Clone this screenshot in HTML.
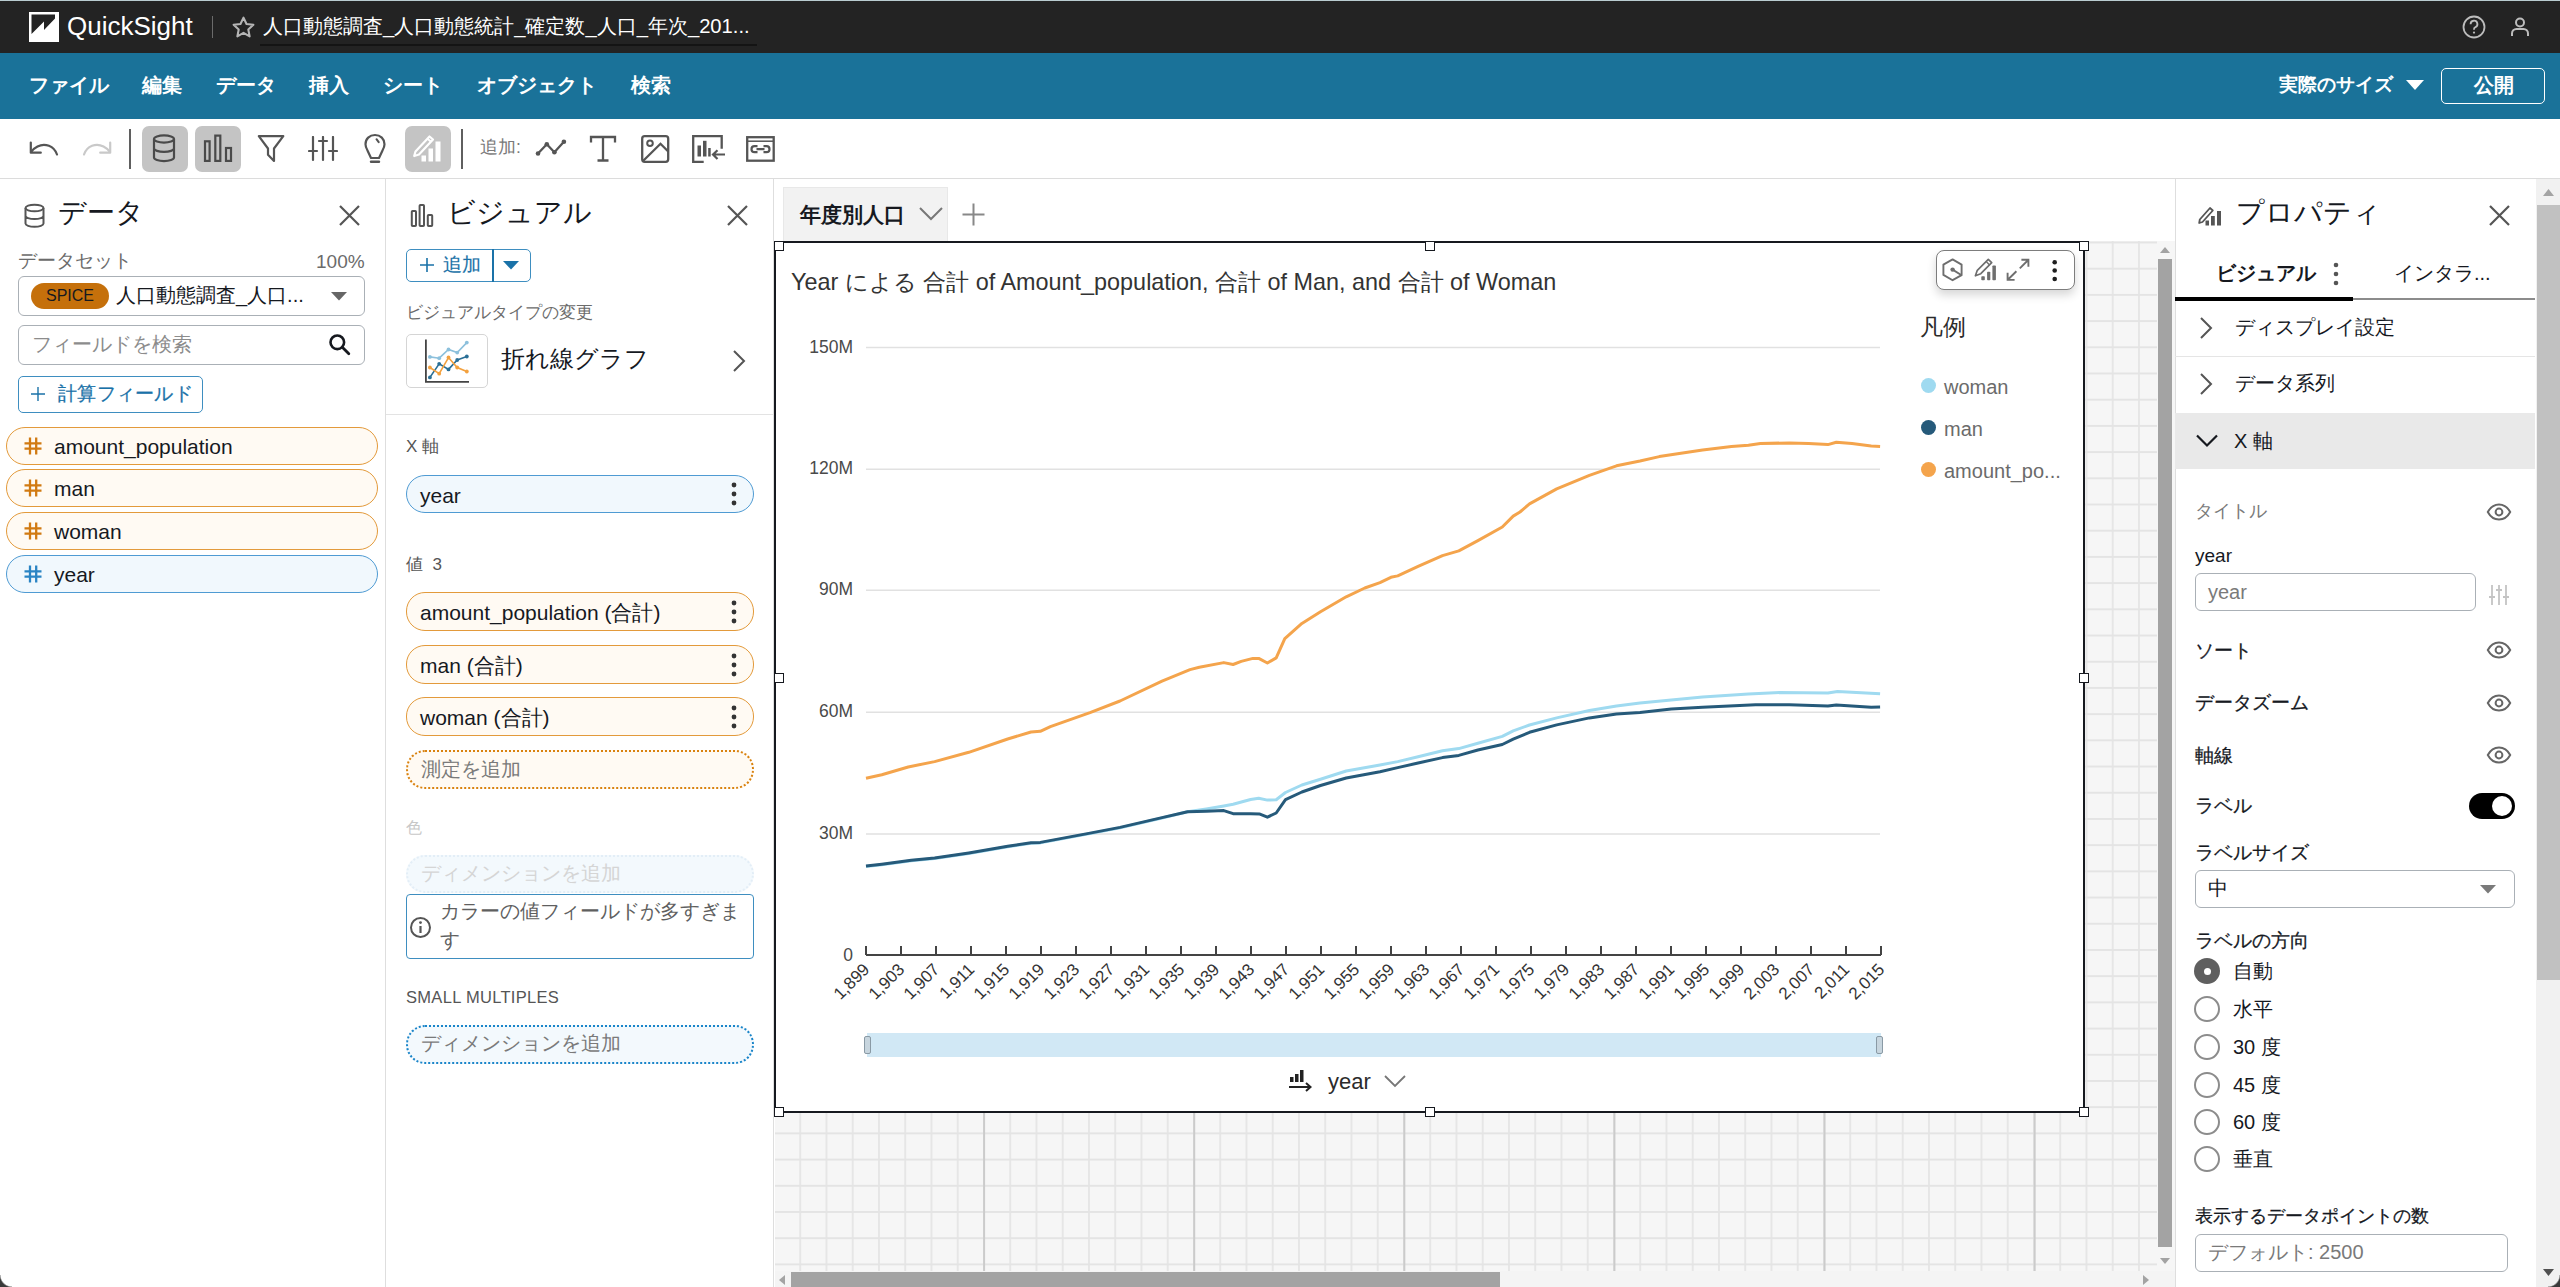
<!DOCTYPE html>
<html lang="ja">
<head>
<meta charset="utf-8">
<style>
*{box-sizing:border-box;margin:0;padding:0}
html,body{width:2560px;height:1287px;overflow:hidden;background:#fff}
body{font-family:"Liberation Sans",sans-serif;color:#16191f;position:relative}
.abs{position:absolute}
.t{position:absolute;white-space:nowrap;line-height:1}
#topbar{position:absolute;left:0;top:0;width:2560px;height:53px;background:#232323;border-top:1px solid #b9ccd0}
#menubar{position:absolute;left:0;top:53px;width:2560px;height:66px;background:#1a7299}
#toolbar{position:absolute;left:0;top:119px;width:2560px;height:60px;background:#fff;border-bottom:1px solid #dcdcdc}
.menu{position:absolute;top:76px;font-size:19.5px;font-weight:bold;color:#fff;line-height:1}
.tbsel{position:absolute;top:126px;width:46px;height:46px;border-radius:7px;background:#c4c4c4}
.sep{position:absolute;width:2px;background:#555}
#leftpanel{position:absolute;left:0;top:179px;width:386px;height:1108px;background:#fff;border-right:1px solid #dedede}
#vispanel{position:absolute;left:386px;top:179px;width:388px;height:1108px;background:#fff;border-right:1px solid #dedede}
#canvas{position:absolute;left:774px;top:179px;width:1401px;height:1108px;background:#fff}
#grid{position:absolute;left:775px;top:241px;width:1382px;height:1030px;background-color:#f6f6f6;
 background-image:linear-gradient(#e4e4e4 2px,transparent 2px),linear-gradient(90deg,#e6e6e6 2px,transparent 2px);
 background-size:26.265px 26.21px;background-position:-2px 0.5px}
#grid2{position:absolute;left:775px;top:241px;width:1382px;height:1030px;
 background-image:linear-gradient(90deg,#cbcbcb 2px,transparent 2px);background-size:210.12px 100%;background-position:-2px 0}
#props{position:absolute;left:2175px;top:179px;width:385px;height:1108px;background:#fff;border-left:1px solid #dedede}
.pill{position:absolute;height:38px;border-radius:19px;border:1.3px solid #e39a3b;background:#fffaf3}
.pill.b{border-color:#4f9bd3;background:#f1f8fd}
.ptxt{position:absolute;font-size:21px;line-height:1;white-space:nowrap;color:#16191f}
.hash{position:absolute;font-size:22px;font-weight:bold;color:#d17a12;line-height:1}
</style>
</head>
<body>
<!-- TOP BAR -->
<div id="topbar"></div>
<svg class="abs" style="left:29px;top:12px" width="31" height="31" viewBox="0 0 31 31">
 <rect x="0" y="0" width="30" height="30" fill="#fff"/>
 <path d="M2.5 2.5 H26 V6.5 L15 18 V9.5 L2.5 22 Z" fill="#232323"/>
</svg>
<div class="t" style="left:67px;top:13px;font-size:26px;color:#fff">QuickSight</div>
<div class="abs" style="left:212px;top:16px;width:1px;height:22px;background:#6b6b6b"></div>
<svg class="abs" style="left:231px;top:15px" width="25" height="25" viewBox="0 0 24 24"><path d="M12 2.5l2.9 6.1 6.6.8-4.9 4.5 1.3 6.6L12 17.2l-5.9 3.3 1.3-6.6-4.9-4.5 6.6-.8z" fill="none" stroke="#b5b5b5" stroke-width="2" stroke-linejoin="round"/></svg>
<div class="t" style="left:263px;top:16px;font-size:20.2px;color:#fff">人口動態調査_人口動態統計_確定数_人口_年次_201...</div>
<div class="abs" style="left:260px;top:44px;width:497px;height:1.5px;background:#141414"></div>
<svg class="abs" style="left:2461px;top:14px" width="26" height="26" viewBox="0 0 26 26"><circle cx="13" cy="13" r="10.5" fill="none" stroke="#bdbdbd" stroke-width="1.8"/><path d="M9.6 10.2a3.4 3.4 0 1 1 4.6 3.1c-.8.4-1.2 1-1.2 1.9v.6" fill="none" stroke="#bdbdbd" stroke-width="1.8"/><circle cx="13" cy="18.6" r="1.1" fill="#bdbdbd"/></svg>
<svg class="abs" style="left:2508px;top:15px" width="24" height="24" viewBox="0 0 24 24"><circle cx="12" cy="7.5" r="4" fill="none" stroke="#bdbdbd" stroke-width="2"/><path d="M4 21v-2.5c0-2.5 2-4.5 4.5-4.5h7c2.5 0 4.5 2 4.5 4.5V21" fill="none" stroke="#bdbdbd" stroke-width="2"/></svg>

<!-- MENU BAR -->
<div id="menubar"></div>
<div class="menu" style="left:29px">ファイル</div>
<div class="menu" style="left:142px">編集</div>
<div class="menu" style="left:216px">データ</div>
<div class="menu" style="left:309px">挿入</div>
<div class="menu" style="left:383px">シート</div>
<div class="menu" style="left:477px">オブジェクト</div>
<div class="menu" style="left:631px">検索</div>
<div class="menu" style="left:2279px;font-size:18.8px">実際のサイズ</div>
<svg class="abs" style="left:2405px;top:79px" width="20" height="12" viewBox="0 0 20 12"><path d="M1 1h18L10 11z" fill="#fff"/></svg>
<div class="abs" style="left:2441px;top:68px;width:104px;height:36px;border:1px solid #fff;border-radius:5px"></div>
<div class="menu" style="left:2474px">公開</div>

<!-- TOOLBAR -->
<div id="toolbar"></div>
<svg class="abs" style="left:28px;top:138px" width="32" height="20" viewBox="0 0 32 20"><path d="M29 16.5C26 8 17 4.5 9.5 8.5 7 9.8 5 11.5 3.5 13.5" fill="none" stroke="#555" stroke-width="2.2" stroke-linecap="round"/><path d="M2.8 4.5v10.2h10" fill="none" stroke="#555" stroke-width="2.2" stroke-linecap="round" stroke-linejoin="round"/></svg>
<svg class="abs" style="left:81px;top:138px" width="32" height="20" viewBox="0 0 32 20"><path d="M3 16.5C6 8 15 4.5 22.5 8.5 25 9.8 27 11.5 28.5 13.5" fill="none" stroke="#c9c9c9" stroke-width="2.2" stroke-linecap="round"/><path d="M29.2 4.5v10.2h-10" fill="none" stroke="#c9c9c9" stroke-width="2.2" stroke-linecap="round" stroke-linejoin="round"/></svg>
<div class="sep" style="left:129px;top:129px;height:40px;width:2px;background:#5f5f5f"></div>
<div class="tbsel" style="left:142px"></div>
<svg class="abs" style="left:152px;top:134px" width="24" height="29" viewBox="0 0 24 29"><ellipse cx="12" cy="5" rx="10" ry="3.6" fill="none" stroke="#4a4a4a" stroke-width="2.2"/><path d="M2 5v18.5c0 2 4.5 3.6 10 3.6s10-1.6 10-3.6V5M2 14.3c0 2 4.5 3.6 10 3.6s10-1.6 10-3.6" fill="none" stroke="#4a4a4a" stroke-width="2.2"/></svg>
<div class="tbsel" style="left:195px"></div>
<svg class="abs" style="left:203px;top:134px" width="30" height="29" viewBox="0 0 30 29"><rect x="2" y="7.3" width="4.6" height="19.6" fill="none" stroke="#4a4a4a" stroke-width="2.2"/><rect x="12.3" y="1.6" width="5" height="25.3" fill="none" stroke="#4a4a4a" stroke-width="2.2"/><rect x="23" y="14" width="5" height="12.9" fill="none" stroke="#4a4a4a" stroke-width="2.2"/></svg>
<svg class="abs" style="left:257px;top:134px" width="28" height="29" viewBox="0 0 28 29"><path d="M1.8 2.2h24.5L17 14.5v12.5l-6-6.2v-6.3z" fill="none" stroke="#555" stroke-width="2.2" stroke-linejoin="round"/></svg>
<svg class="abs" style="left:308px;top:136px" width="30" height="26" viewBox="0 0 30 26"><path d="M5 1v23M15 1v23M25 1v23" stroke="#555" stroke-width="2.2" stroke-linecap="round"/><path d="M1 15h8M11 5h8M21 15h8" stroke="#555" stroke-width="2.2" stroke-linecap="round"/></svg>
<svg class="abs" style="left:363px;top:133px" width="24" height="31" viewBox="0 0 24 31"><path d="M12 2C6.5 2 2.5 6 2.5 11.2c0 2.5 1 4.5 2 6.3L8 25h8l3.5-7.5c1-1.8 2-3.8 2-6.3C21.5 6 17.5 2 12 2z" fill="none" stroke="#555" stroke-width="2.2" stroke-linejoin="round"/><path d="M8 28.8h8" stroke="#555" stroke-width="2.4" stroke-linecap="round"/><path d="M13.5 6.2l2.2 3" stroke="#555" stroke-width="2" stroke-linecap="round"/></svg>
<div class="tbsel" style="left:405px"></div>
<svg class="abs" style="left:413px;top:133px" width="32" height="32" viewBox="0 0 32 32"><path d="M2.5 18.5L16.5 3.5l3.5 3L6 21.5l-4.8 1.5z" fill="none" stroke="#fff" stroke-width="2.2" stroke-linejoin="round"/><path d="M14.5 5.8l3.5 3" stroke="#fff" stroke-width="2"/><rect x="8.5" y="22.5" width="4.5" height="6" fill="#fff"/><rect x="15.5" y="15.5" width="4.5" height="13" fill="#fff"/><rect x="22.5" y="8.5" width="5" height="20" fill="#fff"/></svg>
<div class="sep" style="left:461px;top:129px;height:40px;width:2px;background:#5f5f5f"></div>
<div class="t" style="left:480px;top:139px;font-size:17.5px;color:#7a7a7a">追加:</div>
<svg class="abs" style="left:535px;top:138px" width="32" height="20" viewBox="0 0 32 20"><path d="M3 15.5l8.8-9.2 7.6 8 9.5-10.5" fill="none" stroke="#555" stroke-width="2.3" stroke-linejoin="round"/><circle cx="3" cy="15.5" r="2.3" fill="#555"/><circle cx="11.8" cy="6.3" r="2.3" fill="#555"/><circle cx="19.4" cy="14.3" r="2.3" fill="#555"/><circle cx="28.9" cy="3.8" r="2.3" fill="#555"/></svg>
<svg class="abs" style="left:589px;top:135px" width="28" height="28" viewBox="0 0 28 28"><path d="M2 7.5V2h24v5.5M14 2v23.5M8.5 25.5h11" fill="none" stroke="#555" stroke-width="2.3"/></svg>
<svg class="abs" style="left:640px;top:134px" width="31" height="30" viewBox="0 0 31 30"><rect x="2.2" y="2.2" width="26" height="25.6" rx="2.5" fill="none" stroke="#555" stroke-width="2.3"/><circle cx="10" cy="9.3" r="2.8" fill="none" stroke="#555" stroke-width="2"/><path d="M3 27L20.5 9.8l7.7 7.7" fill="none" stroke="#555" stroke-width="2.3"/></svg>
<svg class="abs" style="left:691px;top:134px" width="36" height="31" viewBox="0 0 36 31"><path d="M2.2 26V2.2h28.5v12.5M2.2 26v1.8h10.5" fill="none" stroke="#555" stroke-width="2.3"/><rect x="6.5" y="11.5" width="3.5" height="11" fill="#555"/><rect x="12" y="6.8" width="3.5" height="15.7" fill="#555"/><rect x="17.2" y="14" width="2.5" height="8.5" fill="#555"/><path d="M34 20.5H22.5M26.5 16.2L22 20.5l4.5 4.5" fill="none" stroke="#555" stroke-width="2.2"/></svg>
<svg class="abs" style="left:745px;top:135px" width="31" height="28" viewBox="0 0 31 28"><rect x="2.2" y="2.2" width="26.5" height="23.5" fill="none" stroke="#555" stroke-width="2.3"/><path d="M2.2 6.2h26.5" stroke="#555" stroke-width="1.5"/><path d="M12.5 11.2h-3a3 3 0 0 0 0 6h3M18.5 11.2h3a3 3 0 0 1 0 6h-3M11.5 14.2h8" fill="none" stroke="#555" stroke-width="2.2"/></svg>

<!-- LEFT DATA PANEL -->
<div id="leftpanel"></div>
<svg class="abs" style="left:23px;top:203px" width="23" height="25" viewBox="0 0 23 25"><ellipse cx="11.5" cy="5" rx="9" ry="3.3" fill="none" stroke="#555" stroke-width="2"/><path d="M2.5 5v15.5c0 1.8 4 3.3 9 3.3s9-1.5 9-3.3V5M2.5 12.8c0 1.8 4 3.3 9 3.3s9-1.5 9-3.3" fill="none" stroke="#555" stroke-width="2"/></svg>
<div class="t" style="left:58px;top:199px;font-size:28px;color:#16191f">データ</div>
<svg class="abs" style="left:338px;top:204px" width="23" height="23" viewBox="0 0 23 23"><path d="M2 2l19 19M21 2L2 21" stroke="#555" stroke-width="2.2"/></svg>
<div class="t" style="left:18px;top:251px;font-size:19px;color:#6b6b6b">データセット</div>
<div class="t" style="left:316px;top:252px;font-size:19px;color:#6b6b6b">100%</div>
<div class="abs" style="left:18px;top:276px;width:347px;height:40px;border:1px solid #aab0b6;border-radius:6px"></div>
<div class="abs" style="left:31px;top:283px;width:78px;height:26px;border-radius:13px;background:#c5700b"></div>
<div class="t" style="left:46px;top:288px;font-size:16px;color:#16191f">SPICE</div>
<div class="t" style="left:116px;top:285px;font-size:20px;color:#16191f">人口動態調査_人口...</div>
<svg class="abs" style="left:330px;top:291px" width="18" height="10" viewBox="0 0 18 10"><path d="M1 1h16L9 9.5z" fill="#666"/></svg>
<div class="abs" style="left:18px;top:325px;width:347px;height:40px;border:1px solid #aab0b6;border-radius:6px"></div>
<div class="t" style="left:32px;top:335px;font-size:19.5px;color:#8c8c8c">フィールドを検索</div>
<svg class="abs" style="left:328px;top:333px" width="23" height="23" viewBox="0 0 23 23"><circle cx="9.3" cy="9.3" r="6.8" fill="none" stroke="#16191f" stroke-width="2.6"/><path d="M14.3 14.3l6.5 6.5" stroke="#16191f" stroke-width="2.8" stroke-linecap="round"/></svg>
<div class="abs" style="left:18px;top:376px;width:185px;height:37px;border:1px solid #3e8ec0;border-radius:5px"></div>
<svg class="abs" style="left:29px;top:385px" width="18" height="18" viewBox="0 0 18 18"><path d="M9 2v14M2 9h14" stroke="#1a72a8" stroke-width="1.4"/></svg>
<div class="t" style="left:58px;top:385px;font-size:18.5px;-webkit-text-stroke:0.25px #1a72a8;color:#1a72a8;letter-spacing:0.3px">計算フィールド</div>

<div class="pill" style="left:6px;top:427px;width:372px"></div>
<div class="abs" style="left:24px;top:437px"><svg width="18" height="18" viewBox="0 0 18 18"><path d="M6 0.5v17M12.2 0.5v17M0.5 6.3h17M0.5 11.6h17" stroke="#d17a12" stroke-width="2.3"/></svg></div>
<div class="ptxt" style="left:54px;top:436px">amount_population</div>
<div class="pill" style="left:6px;top:469px;width:372px"></div>
<div class="abs" style="left:24px;top:479px"><svg width="18" height="18" viewBox="0 0 18 18"><path d="M6 0.5v17M12.2 0.5v17M0.5 6.3h17M0.5 11.6h17" stroke="#d17a12" stroke-width="2.3"/></svg></div>
<div class="ptxt" style="left:54px;top:478px">man</div>
<div class="pill" style="left:6px;top:512px;width:372px"></div>
<div class="abs" style="left:24px;top:522px"><svg width="18" height="18" viewBox="0 0 18 18"><path d="M6 0.5v17M12.2 0.5v17M0.5 6.3h17M0.5 11.6h17" stroke="#d17a12" stroke-width="2.3"/></svg></div>
<div class="ptxt" style="left:54px;top:521px">woman</div>
<div class="pill b" style="left:6px;top:555px;width:372px"></div>
<div class="abs" style="left:24px;top:565px"><svg width="18" height="18" viewBox="0 0 18 18"><path d="M6 0.5v17M12.2 0.5v17M0.5 6.3h17M0.5 11.6h17" stroke="#2a84c4" stroke-width="2.3"/></svg></div>
<div class="ptxt" style="left:54px;top:564px">year</div>

<!-- VISUAL PANEL -->
<div id="vispanel"></div>
<svg class="abs" style="left:410px;top:203px" width="25" height="25" viewBox="0 0 25 25"><rect x="1.8" y="8" width="4.2" height="15" rx="0.8" fill="none" stroke="#555" stroke-width="2"/><rect x="9.6" y="2" width="4.4" height="21" rx="0.8" fill="none" stroke="#555" stroke-width="2"/><rect x="17.8" y="12" width="4.4" height="11" rx="0.8" fill="none" stroke="#555" stroke-width="2"/></svg>
<div class="t" style="left:447px;top:199px;font-size:28px;color:#16191f">ビジュアル</div>
<svg class="abs" style="left:726px;top:204px" width="23" height="23" viewBox="0 0 23 23"><path d="M2 2l19 19M21 2L2 21" stroke="#555" stroke-width="2.2"/></svg>
<div class="abs" style="left:406px;top:249px;width:125px;height:33px;border:1px solid #3e8ec0;border-radius:5px"></div>
<div class="abs" style="left:492px;top:249px;width:1.5px;height:33px;background:#1a72a8"></div>
<svg class="abs" style="left:418px;top:256px" width="18" height="18" viewBox="0 0 18 18"><path d="M9 2v14M2 9h14" stroke="#1a72a8" stroke-width="1.6"/></svg>
<div class="t" style="left:443px;top:256px;font-size:18.5px;-webkit-text-stroke:0.15px #1a72a8;color:#1a72a8">追加</div>
<svg class="abs" style="left:502px;top:260px" width="18" height="10" viewBox="0 0 18 10"><path d="M1 1h16L9 9.5z" fill="#1a72a8"/></svg>
<div class="t" style="left:406px;top:304px;font-size:17px;color:#6b6b6b">ビジュアルタイプの変更</div>
<div class="abs" style="left:406px;top:334px;width:82px;height:54px;border:1px solid #d5d5d5;border-radius:5px;background:#fff"></div>
<svg class="abs" style="left:420px;top:337px" width="52" height="48" viewBox="0 0 52 48"><path d="M5.9 2.5V44.8H49" fill="none" stroke="#444" stroke-width="1.8"/><polyline points="9.9,19.9 19.2,21.2 28.5,12.5 37.2,15.6 46.8,5.6" fill="none" stroke="#8cc0dc" stroke-width="1.6"/><circle cx="9.9" cy="19.9" r="1.9" fill="#8cc0dc"/><circle cx="19.2" cy="21.2" r="1.9" fill="#8cc0dc"/><circle cx="28.5" cy="12.5" r="1.9" fill="#8cc0dc"/><circle cx="37.2" cy="15.6" r="1.9" fill="#8cc0dc"/><circle cx="46.8" cy="5.6" r="1.9" fill="#8cc0dc"/><polyline points="9.9,40.4 19.2,26.8 28.5,32.4 37.2,23 46.8,19.5" fill="none" stroke="#2a6f96" stroke-width="1.6"/><circle cx="9.9" cy="40.4" r="1.9" fill="#2a6f96"/><circle cx="19.2" cy="26.8" r="1.9" fill="#2a6f96"/><circle cx="28.5" cy="32.4" r="1.9" fill="#2a6f96"/><circle cx="37.2" cy="23" r="1.9" fill="#2a6f96"/><circle cx="46.8" cy="19.5" r="1.9" fill="#2a6f96"/><polyline points="9.9,30.5 19.2,36.7 28.5,20.5 37.2,30.5 46.8,34.5" fill="none" stroke="#f3a13f" stroke-width="1.6"/><circle cx="9.9" cy="30.5" r="1.9" fill="#f3a13f"/><circle cx="19.2" cy="36.7" r="1.9" fill="#f3a13f"/><circle cx="28.5" cy="20.5" r="1.9" fill="#f3a13f"/><circle cx="37.2" cy="30.5" r="1.9" fill="#f3a13f"/><circle cx="46.8" cy="34.5" r="1.9" fill="#f3a13f"/></svg>
<div class="t" style="left:501px;top:347px;font-size:24px;color:#16191f">折れ線グラフ</div>
<svg class="abs" style="left:731px;top:349px" width="16" height="24" viewBox="0 0 16 24"><path d="M3 2l10 10L3 22" fill="none" stroke="#555" stroke-width="2"/></svg>
<div class="abs" style="left:386px;top:414px;width:387px;height:1px;background:#e3e3e3"></div>
<div class="t" style="left:406px;top:438px;font-size:17px;color:#555">X 軸</div>
<div class="pill b" style="left:406px;top:475px;width:348px"></div>
<div class="ptxt" style="left:420px;top:485px">year</div>
<svg class="abs" style="left:730px;top:480px" width="8" height="28" viewBox="0 0 8 28"><circle cx="4" cy="5" r="2.4" fill="#333"/><circle cx="4" cy="14" r="2.4" fill="#333"/><circle cx="4" cy="23" r="2.4" fill="#333"/></svg>
<div class="t" style="left:406px;top:556px;font-size:17px;color:#555">値&nbsp;&nbsp;3</div>
<div class="pill" style="left:406px;top:592px;width:348px;height:39px"></div>
<div class="ptxt" style="left:420px;top:602px">amount_population (合計)</div>
<svg class="abs" style="left:730px;top:598px" width="8" height="28" viewBox="0 0 8 28"><circle cx="4" cy="5" r="2.4" fill="#333"/><circle cx="4" cy="14" r="2.4" fill="#333"/><circle cx="4" cy="23" r="2.4" fill="#333"/></svg>
<div class="pill" style="left:406px;top:645px;width:348px;height:39px"></div>
<div class="ptxt" style="left:420px;top:655px">man (合計)</div>
<svg class="abs" style="left:730px;top:651px" width="8" height="28" viewBox="0 0 8 28"><circle cx="4" cy="5" r="2.4" fill="#333"/><circle cx="4" cy="14" r="2.4" fill="#333"/><circle cx="4" cy="23" r="2.4" fill="#333"/></svg>
<div class="pill" style="left:406px;top:697px;width:348px;height:39px"></div>
<div class="ptxt" style="left:420px;top:707px">woman (合計)</div>
<svg class="abs" style="left:730px;top:703px" width="8" height="28" viewBox="0 0 8 28"><circle cx="4" cy="5" r="2.4" fill="#333"/><circle cx="4" cy="14" r="2.4" fill="#333"/><circle cx="4" cy="23" r="2.4" fill="#333"/></svg>
<div class="pill" style="left:406px;top:750px;width:348px;height:39px;border:2.5px dotted #d9820f;background:#fffaf3"></div>
<div class="t" style="left:421px;top:760px;font-size:19.5px;color:#7a7a7a">測定を追加</div>
<div class="t" style="left:406px;top:820px;font-size:16px;color:#c8c8c8">色</div>
<div class="pill" style="left:406px;top:855px;width:348px;height:38px;border:2px dotted #e3eef7;background:#f3f9fd"></div>
<div class="t" style="left:421px;top:864px;font-size:19.5px;color:#d5d5d5">ディメンションを追加</div>
<div class="abs" style="left:406px;top:894px;width:348px;height:65px;border:1px solid #3e8ec0;border-radius:4px;background:#fff"></div>
<svg class="abs" style="left:409px;top:916px" width="23" height="23" viewBox="0 0 23 23"><circle cx="11.5" cy="11.5" r="9.5" fill="none" stroke="#555" stroke-width="2"/><path d="M11.5 10v7" stroke="#555" stroke-width="2.2"/><circle cx="11.5" cy="6.6" r="1.4" fill="#555"/></svg>
<div class="t" style="left:440px;top:902px;font-size:19.5px;color:#5f5f5f">カラーの値フィールドが多すぎま</div>
<div class="t" style="left:440px;top:931px;font-size:19.5px;color:#5f5f5f">す</div>
<div class="t" style="left:406px;top:989px;font-size:16.5px;color:#555;letter-spacing:0.3px">SMALL MULTIPLES</div>
<div class="pill" style="left:406px;top:1025px;width:348px;height:39px;border:2.5px dotted #1a85c9;background:#f3f9fd"></div>
<div class="t" style="left:421px;top:1034px;font-size:19.5px;color:#7a7a7a">ディメンションを追加</div>

<!-- CANVAS -->
<div id="canvas"></div>
<div id="grid"></div>
<div id="grid2"></div>
<div class="abs" style="left:783px;top:187px;width:165px;height:54px;background:#f2f2f2;border:1px solid #e8e8e8;border-bottom:none"></div>
<div class="t" style="left:800px;top:205px;font-size:20.8px;font-weight:bold;color:#16191f">年度別人口</div>
<svg class="abs" style="left:918px;top:206px" width="26" height="16" viewBox="0 0 26 16"><path d="M2 2l11 11L24 2" fill="none" stroke="#777" stroke-width="2"/></svg>
<svg class="abs" style="left:961px;top:202px" width="25" height="25" viewBox="0 0 25 25"><path d="M12.5 1.5v22M1.5 12.5h22" stroke="#888" stroke-width="2"/></svg>
<div class="abs" style="left:774px;top:241px;width:1311px;height:872px;background:#fff;border:2px solid #16191f"></div>
<div class="t" style="left:791px;top:271px;font-size:23.4px;color:#333">Year による 合計 of Amount_population, 合計 of Man, and 合計 of Woman</div>
<svg class="abs" style="left:0;top:0" width="2560" height="1287" viewBox="0 0 2560 1287">
<line x1="866" y1="347.5" x2="1880" y2="347.5" stroke="#e1e1e1" stroke-width="1.6"/>
<text x="853" y="352.5" text-anchor="end" font-size="17.5" fill="#4a4a4a" font-family="Liberation Sans">150M</text>
<line x1="866" y1="469.2" x2="1880" y2="469.2" stroke="#e1e1e1" stroke-width="1.6"/>
<text x="853" y="474.2" text-anchor="end" font-size="17.5" fill="#4a4a4a" font-family="Liberation Sans">120M</text>
<line x1="866" y1="590.3" x2="1880" y2="590.3" stroke="#e1e1e1" stroke-width="1.6"/>
<text x="853" y="595.3" text-anchor="end" font-size="17.5" fill="#4a4a4a" font-family="Liberation Sans">90M</text>
<line x1="866" y1="712.2" x2="1880" y2="712.2" stroke="#e1e1e1" stroke-width="1.6"/>
<text x="853" y="717.2" text-anchor="end" font-size="17.5" fill="#4a4a4a" font-family="Liberation Sans">60M</text>
<line x1="866" y1="834.0" x2="1880" y2="834.0" stroke="#e1e1e1" stroke-width="1.6"/>
<text x="853" y="839.0" text-anchor="end" font-size="17.5" fill="#4a4a4a" font-family="Liberation Sans">30M</text>
<text x="853" y="960.5" text-anchor="end" font-size="17.5" fill="#4a4a4a" font-family="Liberation Sans">0</text>
<line x1="866" y1="955" x2="1881" y2="955" stroke="#444" stroke-width="2"/>
<line x1="866.0" y1="946" x2="866.0" y2="955" stroke="#444" stroke-width="2"/>
<text transform="translate(870.5 970.5) rotate(-45)" text-anchor="end" font-size="17" fill="#333" font-family="Liberation Sans">1,899</text>
<line x1="901.0" y1="946" x2="901.0" y2="955" stroke="#444" stroke-width="2"/>
<text transform="translate(905.5 970.5) rotate(-45)" text-anchor="end" font-size="17" fill="#333" font-family="Liberation Sans">1,903</text>
<line x1="936.0" y1="946" x2="936.0" y2="955" stroke="#444" stroke-width="2"/>
<text transform="translate(940.5 970.5) rotate(-45)" text-anchor="end" font-size="17" fill="#333" font-family="Liberation Sans">1,907</text>
<line x1="971.0" y1="946" x2="971.0" y2="955" stroke="#444" stroke-width="2"/>
<text transform="translate(975.5 970.5) rotate(-45)" text-anchor="end" font-size="17" fill="#333" font-family="Liberation Sans">1,911</text>
<line x1="1006.0" y1="946" x2="1006.0" y2="955" stroke="#444" stroke-width="2"/>
<text transform="translate(1010.5 970.5) rotate(-45)" text-anchor="end" font-size="17" fill="#333" font-family="Liberation Sans">1,915</text>
<line x1="1041.0" y1="946" x2="1041.0" y2="955" stroke="#444" stroke-width="2"/>
<text transform="translate(1045.5 970.5) rotate(-45)" text-anchor="end" font-size="17" fill="#333" font-family="Liberation Sans">1,919</text>
<line x1="1076.0" y1="946" x2="1076.0" y2="955" stroke="#444" stroke-width="2"/>
<text transform="translate(1080.5 970.5) rotate(-45)" text-anchor="end" font-size="17" fill="#333" font-family="Liberation Sans">1,923</text>
<line x1="1111.0" y1="946" x2="1111.0" y2="955" stroke="#444" stroke-width="2"/>
<text transform="translate(1115.5 970.5) rotate(-45)" text-anchor="end" font-size="17" fill="#333" font-family="Liberation Sans">1,927</text>
<line x1="1146.0" y1="946" x2="1146.0" y2="955" stroke="#444" stroke-width="2"/>
<text transform="translate(1150.5 970.5) rotate(-45)" text-anchor="end" font-size="17" fill="#333" font-family="Liberation Sans">1,931</text>
<line x1="1181.0" y1="946" x2="1181.0" y2="955" stroke="#444" stroke-width="2"/>
<text transform="translate(1185.5 970.5) rotate(-45)" text-anchor="end" font-size="17" fill="#333" font-family="Liberation Sans">1,935</text>
<line x1="1216.0" y1="946" x2="1216.0" y2="955" stroke="#444" stroke-width="2"/>
<text transform="translate(1220.5 970.5) rotate(-45)" text-anchor="end" font-size="17" fill="#333" font-family="Liberation Sans">1,939</text>
<line x1="1251.0" y1="946" x2="1251.0" y2="955" stroke="#444" stroke-width="2"/>
<text transform="translate(1255.5 970.5) rotate(-45)" text-anchor="end" font-size="17" fill="#333" font-family="Liberation Sans">1,943</text>
<line x1="1286.0" y1="946" x2="1286.0" y2="955" stroke="#444" stroke-width="2"/>
<text transform="translate(1290.5 970.5) rotate(-45)" text-anchor="end" font-size="17" fill="#333" font-family="Liberation Sans">1,947</text>
<line x1="1321.0" y1="946" x2="1321.0" y2="955" stroke="#444" stroke-width="2"/>
<text transform="translate(1325.5 970.5) rotate(-45)" text-anchor="end" font-size="17" fill="#333" font-family="Liberation Sans">1,951</text>
<line x1="1356.0" y1="946" x2="1356.0" y2="955" stroke="#444" stroke-width="2"/>
<text transform="translate(1360.5 970.5) rotate(-45)" text-anchor="end" font-size="17" fill="#333" font-family="Liberation Sans">1,955</text>
<line x1="1391.0" y1="946" x2="1391.0" y2="955" stroke="#444" stroke-width="2"/>
<text transform="translate(1395.5 970.5) rotate(-45)" text-anchor="end" font-size="17" fill="#333" font-family="Liberation Sans">1,959</text>
<line x1="1426.0" y1="946" x2="1426.0" y2="955" stroke="#444" stroke-width="2"/>
<text transform="translate(1430.5 970.5) rotate(-45)" text-anchor="end" font-size="17" fill="#333" font-family="Liberation Sans">1,963</text>
<line x1="1461.0" y1="946" x2="1461.0" y2="955" stroke="#444" stroke-width="2"/>
<text transform="translate(1465.5 970.5) rotate(-45)" text-anchor="end" font-size="17" fill="#333" font-family="Liberation Sans">1,967</text>
<line x1="1496.0" y1="946" x2="1496.0" y2="955" stroke="#444" stroke-width="2"/>
<text transform="translate(1500.5 970.5) rotate(-45)" text-anchor="end" font-size="17" fill="#333" font-family="Liberation Sans">1,971</text>
<line x1="1531.0" y1="946" x2="1531.0" y2="955" stroke="#444" stroke-width="2"/>
<text transform="translate(1535.5 970.5) rotate(-45)" text-anchor="end" font-size="17" fill="#333" font-family="Liberation Sans">1,975</text>
<line x1="1566.0" y1="946" x2="1566.0" y2="955" stroke="#444" stroke-width="2"/>
<text transform="translate(1570.5 970.5) rotate(-45)" text-anchor="end" font-size="17" fill="#333" font-family="Liberation Sans">1,979</text>
<line x1="1601.0" y1="946" x2="1601.0" y2="955" stroke="#444" stroke-width="2"/>
<text transform="translate(1605.5 970.5) rotate(-45)" text-anchor="end" font-size="17" fill="#333" font-family="Liberation Sans">1,983</text>
<line x1="1636.0" y1="946" x2="1636.0" y2="955" stroke="#444" stroke-width="2"/>
<text transform="translate(1640.5 970.5) rotate(-45)" text-anchor="end" font-size="17" fill="#333" font-family="Liberation Sans">1,987</text>
<line x1="1671.0" y1="946" x2="1671.0" y2="955" stroke="#444" stroke-width="2"/>
<text transform="translate(1675.5 970.5) rotate(-45)" text-anchor="end" font-size="17" fill="#333" font-family="Liberation Sans">1,991</text>
<line x1="1706.0" y1="946" x2="1706.0" y2="955" stroke="#444" stroke-width="2"/>
<text transform="translate(1710.5 970.5) rotate(-45)" text-anchor="end" font-size="17" fill="#333" font-family="Liberation Sans">1,995</text>
<line x1="1741.0" y1="946" x2="1741.0" y2="955" stroke="#444" stroke-width="2"/>
<text transform="translate(1745.5 970.5) rotate(-45)" text-anchor="end" font-size="17" fill="#333" font-family="Liberation Sans">1,999</text>
<line x1="1776.0" y1="946" x2="1776.0" y2="955" stroke="#444" stroke-width="2"/>
<text transform="translate(1780.5 970.5) rotate(-45)" text-anchor="end" font-size="17" fill="#333" font-family="Liberation Sans">2,003</text>
<line x1="1811.0" y1="946" x2="1811.0" y2="955" stroke="#444" stroke-width="2"/>
<text transform="translate(1815.5 970.5) rotate(-45)" text-anchor="end" font-size="17" fill="#333" font-family="Liberation Sans">2,007</text>
<line x1="1846.0" y1="946" x2="1846.0" y2="955" stroke="#444" stroke-width="2"/>
<text transform="translate(1850.5 970.5) rotate(-45)" text-anchor="end" font-size="17" fill="#333" font-family="Liberation Sans">2,011</text>
<line x1="1881.0" y1="946" x2="1881.0" y2="955" stroke="#444" stroke-width="2"/>
<text transform="translate(1885.5 970.5) rotate(-45)" text-anchor="end" font-size="17" fill="#333" font-family="Liberation Sans">2,015</text>
<polyline points="866.0,778.2 881.8,774.8 908.2,767.0 934.6,761.6 968.8,752.3 1007.7,739.0 1031.0,732.0 1040.3,731.3 1050.4,726.6 1090.0,712.6 1120.0,701.0 1162.0,681.2 1190.0,669.6 1199.3,667.3 1223.8,662.6 1233.1,664.5 1241.2,661.4 1252.9,658.4 1258.7,658.4 1267.4,663.0 1276.2,657.9 1284.8,638.6 1301.9,623.4 1320.5,611.8 1346.2,596.8 1364.8,588.0 1380.0,582.7 1390.9,577.3 1397.7,575.9 1418.1,566.4 1442.5,555.6 1458.8,550.9 1477.9,540.6 1502.3,527.0 1513.2,516.1 1520.0,512.0 1529.5,503.9 1556.7,488.9 1589.4,475.3 1616.5,465.8 1640.0,461.0 1659.3,456.6 1702.6,450.1 1731.5,446.5 1748.4,445.3 1760.4,443.6 1789.3,442.9 1808.6,443.4 1827.9,444.6 1836.3,442.2 1852.0,443.4 1871.2,446.0 1880.1,446.5" fill="none" stroke="#f4a44c" stroke-width="3" stroke-linejoin="round"/>
<polyline points="866.0,866.6 881.8,864.7 911.3,860.8 934.6,858.5 968.8,853.4 1007.7,846.8 1031.0,843.3 1040.3,842.9 1090.0,833.6 1120.0,827.9 1162.0,818.0 1187.6,811.8 1206.3,809.0 1223.8,806.0 1233.1,804.3 1250.6,799.5 1258.7,798.3 1267.4,800.1 1276.2,799.7 1285.5,792.5 1301.9,785.0 1320.5,779.2 1346.2,771.0 1380.0,764.9 1397.7,761.6 1418.1,756.7 1442.5,750.8 1458.8,748.6 1477.9,743.2 1502.3,736.4 1513.2,730.9 1529.5,725.0 1556.7,717.9 1589.4,710.5 1616.5,705.9 1640.0,703.0 1702.6,697.0 1748.4,694.1 1779.7,692.6 1827.9,692.9 1837.5,691.4 1880.1,693.8" fill="none" stroke="#9fdaf0" stroke-width="3" stroke-linejoin="round"/>
<polyline points="866.0,866.1 881.8,864.2 911.3,860.3 934.6,858.0 968.8,852.9 1007.7,846.3 1031.0,842.8 1040.3,842.4 1090.0,833.1 1120.0,827.4 1162.0,817.6 1187.6,811.8 1206.3,811.3 1223.8,810.6 1233.1,813.7 1250.6,813.7 1259.9,814.1 1267.4,817.2 1276.2,813.0 1285.5,799.7 1301.9,792.0 1320.5,785.5 1346.2,778.0 1380.0,771.7 1397.7,767.6 1418.1,763.0 1442.5,757.6 1458.8,755.4 1477.9,750.0 1502.3,744.5 1513.2,739.1 1529.5,732.3 1556.7,724.9 1589.4,717.9 1616.5,714.1 1640.0,712.6 1671.3,709.0 1702.6,707.3 1755.6,704.7 1789.3,704.7 1827.9,706.1 1836.3,704.9 1871.2,707.3 1880.1,707.1" fill="none" stroke="#265a7a" stroke-width="3" stroke-linejoin="round"/>
</svg>
<!-- handles -->
<div class="abs" style="left:774px;top:241px;width:10px;height:10px;background:#fff;border:1.5px solid #16191f"></div>
<div class="abs" style="left:1425px;top:241px;width:10px;height:10px;background:#fff;border:1.5px solid #16191f"></div>
<div class="abs" style="left:2079px;top:241px;width:10px;height:10px;background:#fff;border:1.5px solid #16191f"></div>
<div class="abs" style="left:774px;top:673px;width:10px;height:10px;background:#fff;border:1.5px solid #16191f"></div>
<div class="abs" style="left:2079px;top:673px;width:10px;height:10px;background:#fff;border:1.5px solid #16191f"></div>
<div class="abs" style="left:774px;top:1107px;width:10px;height:10px;background:#fff;border:1.5px solid #16191f"></div>
<div class="abs" style="left:1425px;top:1107px;width:10px;height:10px;background:#fff;border:1.5px solid #16191f"></div>
<div class="abs" style="left:2079px;top:1107px;width:10px;height:10px;background:#fff;border:1.5px solid #16191f"></div>
<!-- floating toolbar -->
<div class="abs" style="left:1936px;top:250px;width:139px;height:40px;background:#fff;border:1.5px solid #7d7d7d;border-radius:8px;box-shadow:0 5px 10px rgba(0,0,0,0.16)"></div>
<svg class="abs" style="left:1936px;top:250px" width="140" height="40" viewBox="0 0 140 40">
<path d="M16.6 9.4 L25.6 14.6 L25.6 25.2 L16.6 30.2 L7.4 24.9 L7.4 14.6 Z" fill="none" stroke="#6e6e6e" stroke-width="1.9" stroke-linejoin="round"/><circle cx="16.6" cy="19.6" r="2.2" fill="#6e6e6e"/><path d="M16.6 19.6 L25.2 25.0" stroke="#6e6e6e" stroke-width="1.9"/><path d="M39.4 25.8 L41.3 20.3 L52.3 9.4 L55.7 12.7 L44.8 23.7 Z" fill="none" stroke="#6e6e6e" stroke-width="1.7" stroke-linejoin="round"/><path d="M50.2 11.6 L53.6 14.9" stroke="#6e6e6e" stroke-width="1.4"/><rect x="45.3" y="26.3" width="3.5" height="3.9" rx="0.8" fill="#6e6e6e"/><rect x="51.1" y="21.7" width="3.2" height="8.5" rx="0.8" fill="#6e6e6e"/><rect x="56.4" y="15.5" width="3.5" height="14.7" rx="0.8" fill="#6e6e6e"/><path d="M85.4 9.8 L92.4 9.8 L92.4 16.8 M92.2 10.0 L83.8 18.4" fill="none" stroke="#6e6e6e" stroke-width="1.9"/><path d="M71.6 22.8 L71.6 29.9 L78.6 29.9 M71.8 29.7 L80.4 21.3" fill="none" stroke="#6e6e6e" stroke-width="1.9"/><circle cx="118.7" cy="12.3" r="2.3" fill="#1e1e1e"/><circle cx="118.7" cy="20.5" r="2.3" fill="#1e1e1e"/><circle cx="118.7" cy="29.0" r="2.3" fill="#1e1e1e"/></svg>
<!-- legend -->
<div class="t" style="left:1920px;top:316px;font-size:23px;color:#2b2b2b">凡例</div>
<div class="abs" style="left:1921px;top:378px;width:15px;height:15px;border-radius:50%;background:#9fdaf0"></div>
<div class="t" style="left:1944px;top:377px;font-size:20px;color:#6b6b6b">woman</div>
<div class="abs" style="left:1921px;top:420px;width:15px;height:15px;border-radius:50%;background:#265a7a"></div>
<div class="t" style="left:1944px;top:419px;font-size:20px;color:#6b6b6b">man</div>
<div class="abs" style="left:1921px;top:462px;width:15px;height:15px;border-radius:50%;background:#f4a44c"></div>
<div class="t" style="left:1944px;top:461px;font-size:20px;color:#6b6b6b">amount_po...</div>
<!-- zoom slider -->
<div class="abs" style="left:867px;top:1033px;width:1014px;height:24px;background:#d1e8f5"></div>
<div class="abs" style="left:864px;top:1036px;width:7px;height:18px;border:1.5px solid #8a9aa5;border-radius:2px;background:#c7d5de"></div>
<div class="abs" style="left:1876px;top:1036px;width:7px;height:18px;border:1.5px solid #8a9aa5;border-radius:2px;background:#c7d5de"></div>
<svg class="abs" style="left:1288px;top:1069px" width="26" height="24" viewBox="0 0 26 24"><rect x="2" y="8" width="3.5" height="5" fill="#222"/><rect x="7" y="5" width="3.5" height="8" fill="#222"/><rect x="12" y="1" width="3.5" height="12" fill="#222"/><path d="M1 18h21M18 14l4.5 4-4.5 4" fill="none" stroke="#222" stroke-width="2"/></svg>
<div class="t" style="left:1328px;top:1071px;font-size:22px;color:#2b2b2b">year</div>
<svg class="abs" style="left:1383px;top:1074px" width="24" height="15" viewBox="0 0 24 15"><path d="M2 2l10 10L22 2" fill="none" stroke="#777" stroke-width="1.8"/></svg>
<!-- canvas scrollbars -->
<div class="abs" style="left:2157px;top:241px;width:18px;height:1030px;background:#f6f6f6"></div>
<div class="abs" style="left:2158px;top:259px;width:14px;height:988px;background:#a3a3a3"></div>
<svg class="abs" style="left:2159px;top:246px" width="12" height="8" viewBox="0 0 12 8"><path d="M1 7h10L6 1z" fill="#a3a3a3"/></svg>
<svg class="abs" style="left:2159px;top:1257px" width="12" height="8" viewBox="0 0 12 8"><path d="M1 1h10L6 7z" fill="#a3a3a3"/></svg>
<div class="abs" style="left:775px;top:1271px;width:1400px;height:16px;background:#f4f4f4"></div>
<div class="abs" style="left:791px;top:1272px;width:709px;height:15px;background:#a3a3a3"></div>
<svg class="abs" style="left:778px;top:1274px" width="8" height="12" viewBox="0 0 8 12"><path d="M7 1v10L1 6z" fill="#a3a3a3"/></svg>
<svg class="abs" style="left:2142px;top:1274px" width="8" height="12" viewBox="0 0 8 12"><path d="M1 1v10l6-5z" fill="#a3a3a3"/></svg>

<!-- PROPERTIES -->
<div id="props"></div>
<svg class="abs" style="left:2198px;top:203px" width="26" height="25" viewBox="0 0 26 25"><path d="M1.8 16.5L12 5l2.8 2.5L4.5 19l-3.3 1z" fill="none" stroke="#555" stroke-width="1.8" stroke-linejoin="round"/><rect x="7.5" y="17.5" width="3.5" height="5" fill="#555"/><rect x="13" y="13" width="3.8" height="9.5" fill="#555"/><rect x="19" y="8" width="4" height="14.5" fill="#555"/></svg>
<div class="t" style="left:2236px;top:199px;font-size:28px;color:#16191f">プロパティ</div>
<svg class="abs" style="left:2488px;top:204px" width="23" height="23" viewBox="0 0 23 23"><path d="M2 2l19 19M21 2L2 21" stroke="#555" stroke-width="2.2"/></svg>
<div class="t" style="left:2216px;top:263px;font-size:20px;font-weight:bold;color:#16191f">ビジュアル</div>
<svg class="abs" style="left:2332px;top:261px" width="8" height="26" viewBox="0 0 8 26"><circle cx="4" cy="4" r="2.3" fill="#555"/><circle cx="4" cy="13" r="2.3" fill="#555"/><circle cx="4" cy="22" r="2.3" fill="#555"/></svg>
<div class="t" style="left:2394px;top:263px;font-size:20px;color:#16191f">インタラ...</div>
<div class="abs" style="left:2175px;top:298px;width:360px;height:1.5px;background:#8c8c8c"></div>
<div class="abs" style="left:2175px;top:296.5px;width:178px;height:4px;background:#000"></div>
<svg class="abs" style="left:2198px;top:316px" width="16" height="24" viewBox="0 0 16 24"><path d="M3 2l10 10L3 22" fill="none" stroke="#555" stroke-width="2"/></svg>
<div class="t" style="left:2235px;top:317px;font-size:20px;color:#16191f">ディスプレイ設定</div>
<div class="abs" style="left:2175px;top:356px;width:360px;height:1px;background:#e5e5e5"></div>
<svg class="abs" style="left:2198px;top:372px" width="16" height="24" viewBox="0 0 16 24"><path d="M3 2l10 10L3 22" fill="none" stroke="#555" stroke-width="2"/></svg>
<div class="t" style="left:2235px;top:373px;font-size:20px;color:#16191f">データ系列</div>
<div class="abs" style="left:2175px;top:413px;width:360px;height:56px;background:#e9e9e9"></div>
<svg class="abs" style="left:2195px;top:433px" width="24" height="16" viewBox="0 0 24 16"><path d="M2 2.5l10 10 10-10" fill="none" stroke="#16191f" stroke-width="2.2"/></svg>
<div class="t" style="left:2234px;top:431px;font-size:20px;color:#16191f">X 軸</div>
<div class="t" style="left:2195px;top:503px;font-size:17.5px;color:#7a7a7a">タイトル</div>
<div class="abs" style="left:2486px;top:502px"><svg width="26" height="20" viewBox="0 0 26 20"><path d="M1.8 10C4.5 5 8.5 2.5 13 2.5S21.5 5 24.2 10C21.5 15 17.5 17.5 13 17.5S4.5 15 1.8 10z" fill="none" stroke="#666" stroke-width="2"/><circle cx="13" cy="10" r="3.4" fill="none" stroke="#666" stroke-width="2"/></svg></div>
<div class="t" style="left:2195px;top:546px;font-size:19px;color:#16191f">year</div>
<div class="abs" style="left:2195px;top:573px;width:281px;height:38px;border:1px solid #aab0b6;border-radius:6px"></div>
<div class="t" style="left:2208px;top:582px;font-size:20px;color:#7a7a7a">year</div>
<svg class="abs" style="left:2488px;top:584px" width="22" height="22" viewBox="0 0 22 22"><path d="M4 1v20M11 1v20M18 1v20" stroke="#c4c4c4" stroke-width="1.8"/><path d="M1 13h6M8 6h6M15 13h6" stroke="#c4c4c4" stroke-width="1.8"/></svg>
<div class="t" style="left:2195px;top:642px;font-size:18.5px;color:#16191f;-webkit-text-stroke:0.25px #16191f">ソート</div>
<div class="abs" style="left:2486px;top:640px"><svg width="26" height="20" viewBox="0 0 26 20"><path d="M1.8 10C4.5 5 8.5 2.5 13 2.5S21.5 5 24.2 10C21.5 15 17.5 17.5 13 17.5S4.5 15 1.8 10z" fill="none" stroke="#666" stroke-width="2"/><circle cx="13" cy="10" r="3.4" fill="none" stroke="#666" stroke-width="2"/></svg></div>
<div class="t" style="left:2195px;top:694px;font-size:18.5px;color:#16191f;-webkit-text-stroke:0.25px #16191f">データズーム</div>
<div class="abs" style="left:2486px;top:693px"><svg width="26" height="20" viewBox="0 0 26 20"><path d="M1.8 10C4.5 5 8.5 2.5 13 2.5S21.5 5 24.2 10C21.5 15 17.5 17.5 13 17.5S4.5 15 1.8 10z" fill="none" stroke="#666" stroke-width="2"/><circle cx="13" cy="10" r="3.4" fill="none" stroke="#666" stroke-width="2"/></svg></div>
<div class="t" style="left:2195px;top:747px;font-size:18.5px;color:#16191f;-webkit-text-stroke:0.25px #16191f">軸線</div>
<div class="abs" style="left:2486px;top:745px"><svg width="26" height="20" viewBox="0 0 26 20"><path d="M1.8 10C4.5 5 8.5 2.5 13 2.5S21.5 5 24.2 10C21.5 15 17.5 17.5 13 17.5S4.5 15 1.8 10z" fill="none" stroke="#666" stroke-width="2"/><circle cx="13" cy="10" r="3.4" fill="none" stroke="#666" stroke-width="2"/></svg></div>
<div class="t" style="left:2195px;top:797px;font-size:18.5px;color:#16191f;-webkit-text-stroke:0.25px #16191f">ラベル</div>
<div class="abs" style="left:2469px;top:793px;width:46px;height:26px;border-radius:13px;background:#000"></div>
<div class="abs" style="left:2492px;top:796px;width:20px;height:20px;border-radius:50%;background:#fff"></div>
<div class="t" style="left:2195px;top:844px;font-size:18.5px;color:#16191f;-webkit-text-stroke:0.25px #16191f">ラベルサイズ</div>
<div class="abs" style="left:2195px;top:870px;width:320px;height:38px;border:1px solid #aab0b6;border-radius:6px"></div>
<div class="t" style="left:2208px;top:878px;font-size:20px;color:#16191f">中</div>
<svg class="abs" style="left:2479px;top:884px" width="18" height="10" viewBox="0 0 18 10"><path d="M1 1h16L9 9.5z" fill="#7a7a7a"/></svg>
<div class="t" style="left:2195px;top:932px;font-size:18.5px;color:#16191f;-webkit-text-stroke:0.25px #16191f">ラベルの方向</div>
<div class="abs" style="left:2194px;top:958px;width:26px;height:26px;border-radius:50%;background:#5f5f5f"></div><div class="abs" style="left:2203.5px;top:967.5px;width:7px;height:7px;border-radius:50%;background:#fff"></div>
<div class="t" style="left:2233px;top:961px;font-size:20px;color:#16191f">自動</div>
<div class="abs" style="left:2194px;top:996px;width:26px;height:26px;border-radius:50%;border:2px solid #8c8c8c;background:#fff"></div>
<div class="t" style="left:2233px;top:999px;font-size:20px;color:#16191f">水平</div>
<div class="abs" style="left:2194px;top:1034px;width:26px;height:26px;border-radius:50%;border:2px solid #8c8c8c;background:#fff"></div>
<div class="t" style="left:2233px;top:1037px;font-size:20px;color:#16191f">30 度</div>
<div class="abs" style="left:2194px;top:1072px;width:26px;height:26px;border-radius:50%;border:2px solid #8c8c8c;background:#fff"></div>
<div class="t" style="left:2233px;top:1075px;font-size:20px;color:#16191f">45 度</div>
<div class="abs" style="left:2194px;top:1109px;width:26px;height:26px;border-radius:50%;border:2px solid #8c8c8c;background:#fff"></div>
<div class="t" style="left:2233px;top:1112px;font-size:20px;color:#16191f">60 度</div>
<div class="abs" style="left:2194px;top:1146px;width:26px;height:26px;border-radius:50%;border:2px solid #8c8c8c;background:#fff"></div>
<div class="t" style="left:2233px;top:1149px;font-size:20px;color:#16191f">垂直</div>
<div class="t" style="left:2195px;top:1207px;font-size:18.2px;color:#16191f;-webkit-text-stroke:0.25px #16191f">表示するデータポイントの数</div>
<div class="abs" style="left:2195px;top:1234px;width:313px;height:38px;border:1px solid #aab0b6;border-radius:6px"></div>
<div class="t" style="left:2208px;top:1242px;font-size:20px;color:#7a7a7a">デフォルト: 2500</div>
<!-- right scrollbar -->
<div class="abs" style="left:2536px;top:179px;width:24px;height:1108px;background:#f1f1f1"></div>
<div class="abs" style="left:2537px;top:205px;width:23px;height:775px;background:#c1c1c1"></div>
<svg class="abs" style="left:2542px;top:188px" width="13" height="9" viewBox="0 0 13 9"><path d="M1 8h11L6.5 1z" fill="#a3a3a3"/></svg>
<svg class="abs" style="left:2542px;top:1268px" width="13" height="9" viewBox="0 0 13 9"><path d="M1 1h11L6.5 8z" fill="#505050"/></svg>
<div class="abs" style="left:0;top:1275px;width:12px;height:12px;background:radial-gradient(circle at 12px 0,rgba(0,0,0,0) 11px,#3a3a3a 12.5px)"></div>
<div class="abs" style="left:2548px;top:1275px;width:12px;height:12px;background:radial-gradient(circle at 0 0,rgba(0,0,0,0) 11px,#3a3a3a 12.5px)"></div>
</body>
</html>
